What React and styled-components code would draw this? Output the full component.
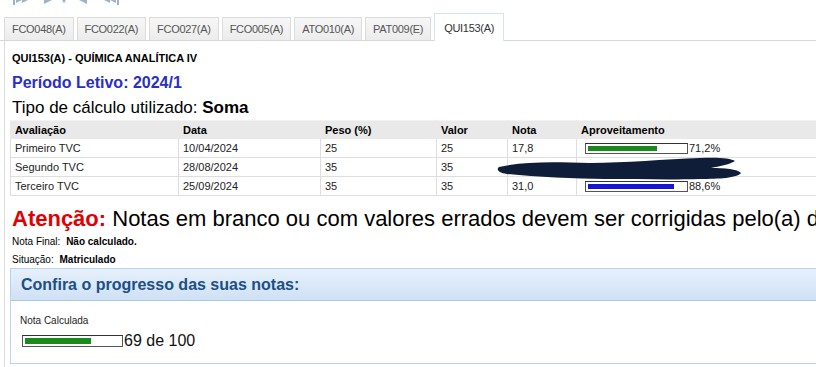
import React from "react";
import styled, { createGlobalStyle } from "styled-components";

const Global = createGlobalStyle`
  html, body { margin: 0; padding: 0; background: #fff; overflow: hidden; }
  body { font-family: "Liberation Sans", Arial, sans-serif; color: #000; }
`;

const Page = styled.div`
  width: 816px;
  height: 367px;
  position: relative;
  overflow: hidden;
  background: #fff;
`;

const Pager = styled.svg`
  display: block;
  width: 130px;
  height: 6px;
`;

const TabBar = styled.div`
  display: flex;
  align-items: flex-end;
  gap: 3px;
  height: 35px;
  padding-left: 4px;
  border-bottom: 1px solid #d6d6d6;
  box-sizing: border-box;
`;

const Tab = styled.div`
  box-sizing: border-box;
  height: ${(p) => (p.$active ? "28px" : "23px")};
  padding: 0 ${(p) => (p.$active ? "9px" : "7px")};
  display: flex;
  align-items: center;
  font-size: 11px;
  color: ${(p) => (p.$active ? "#333" : "#555")};
  background: ${(p) => (p.$active ? "#fff" : "linear-gradient(#f7f7f7, #ececec)")};
  border: 1px solid ${(p) => (p.$active ? "#d5e3f0" : "#dcdcdc")};
  border-bottom: none;
  margin-bottom: ${(p) => (p.$active ? "-1px" : "0")};
  letter-spacing: -0.3px;
`;

const Panel = styled.div`
  border-left: 1px solid #dcdcdc;
  margin-left: 4px;
  padding: 10px 0 0 5px;
  height: 340px;
  box-sizing: border-box;
`;

const CourseTitle = styled.div`
  font-size: 11px;
  font-weight: bold;
  padding-left: 2px;
  line-height: 14px;
`;

const Period = styled.div`
  margin-top: 9px;
  font-size: 16px;
  font-weight: bold;
  color: #2a2fc4;
  padding-left: 2px;
  line-height: 18px;
`;

const CalcType = styled.div`
  margin-top: 6px;
  font-size: 17px;
  padding-left: 2px;
  line-height: 20px;
  b { font-weight: bold; }
`;

const Table = styled.table`
  margin-top: 2px;
  border-collapse: collapse;
  width: 900px;
  font-size: 11px;
  table-layout: fixed;
`;

const Th = styled.th`
  text-align: left;
  font-weight: bold;
  background: #e9e9e9;
  height: 16px;
  padding: 1px 4px 0;
  border: 1px solid #e9e9e9;
  border-top: 1px solid #f3f3f3;
`;

const Td = styled.td`
  height: 18px;
  padding: 0 4px;
  border: 1px solid #dedede;
  color: #222;
  white-space: nowrap;
`;

const BarWrap = styled.div`
  display: flex;
  align-items: center;
  gap: 1px;
  margin-top: ${(p) => p.$mt || 0}px;
  margin-left: ${(p) => p.$ml || 0}px;
`;

const Bar = styled.span`
  display: inline-block;
  box-sizing: border-box;
  width: ${(p) => p.$w}px;
  height: ${(p) => p.$h}px;
  border: 1px solid #555;
  border-top-color: #333;
  padding: 2px;
  background: #fff;
`;

const Fill = styled.span`
  display: block;
  height: 100%;
  background: ${(p) => p.$color};
`;

const Scribble = styled.svg`
  position: absolute;
  left: 495px;
  top: 156px;
  pointer-events: none;
`;

const Warning = styled.div`
  margin-top: 10px;
  font-size: 22px;
  line-height: 26px;
  white-space: nowrap;
  padding-left: 2px;
`;

const Red = styled.span`
  color: #e30000;
  font-weight: bold;
`;

const Info = styled.div`
  font-size: 10px;
  line-height: 13px;
  margin-top: ${(p) => p.$mt}px;
  padding-left: 2px;
  b { font-weight: bold; margin-left: 3px; }
`;

const Box = styled.div`
  margin-top: 2px;
  width: 900px;
  border: 1px solid #b9d3ea;
  box-sizing: border-box;
`;

const BoxHead = styled.div`
  height: 31px;
  display: flex;
  align-items: center;
  padding-left: 10px;
  background: linear-gradient(#e6f0fb, #cfe1f5);
  border-bottom: 1px solid #a9c7e6;
  color: #1c4f88;
  font-size: 16px;
  font-weight: bold;
`;

const BoxBody = styled.div`
  padding: 14px 0 0 9px;
  height: 62px;
  box-sizing: border-box;
`;

const SmallLabel = styled.div`
  font-size: 10px;
  line-height: 12px;
  color: #222;
`;

const Score = styled.span`
  font-size: 16px;
  line-height: 18px;
  color: #111;
`;

const tabs = ["FCO048(A)", "FCO022(A)", "FCO027(A)", "FCO005(A)", "ATO010(A)", "PAT009(E)", "QUI153(A)"];

const rows = [
  { a: "Primeiro TVC", d: "10/04/2024", p: "25", v: "25", n: "17,8", pct: 71.2, color: "#1a8a1a", label: "71,2%" },
  { a: "Segundo TVC", d: "28/08/2024", p: "35", v: "35", n: "", pct: null },
  { a: "Terceiro TVC", d: "25/09/2024", p: "35", v: "35", n: "31,0", pct: 88.6, color: "#1515d6", label: "88,6%" },
];

export default function App() {
  return (
    <Page>
      <Global />
      <Pager viewBox="0 0 130 6">
        <g fill="#9db2cc">
          <rect x="13" y="0" width="2" height="5" />
          <polygon points="16,0 22,0 16,3" />
          <polygon points="22,0 28,0 22,3" />
          <polygon points="44,0 52,0 44,4" />
          <circle cx="64" cy="1" r="1.5" />
          <polygon points="79,0 87,0 87,4" />
          <polygon points="104,0 110,0 110,3" />
          <polygon points="110,0 116,0 116,3" />
          <rect x="117" y="0" width="2" height="5" />
        </g>
      </Pager>
      <TabBar>
        {tabs.map((t, i) => (
          <Tab key={t} $active={i === tabs.length - 1}>{t}</Tab>
        ))}
      </TabBar>
      <Panel>
        <CourseTitle>QUI153(A) - QUÍMICA ANALÍTICA IV</CourseTitle>
        <Period>Período Letivo: 2024/1</Period>
        <CalcType>Tipo de cálculo utilizado: <b>Soma</b></CalcType>
        <Table>
          <colgroup>
            <col style={{ width: 168 }} />
            <col style={{ width: 142 }} />
            <col style={{ width: 116 }} />
            <col style={{ width: 71 }} />
            <col style={{ width: 69 }} />
            <col />
          </colgroup>
          <thead>
            <tr>
              <Th>Avaliação</Th>
              <Th>Data</Th>
              <Th>Peso (%)</Th>
              <Th>Valor</Th>
              <Th>Nota</Th>
              <Th>Aproveitamento</Th>
            </tr>
          </thead>
          <tbody>
            {rows.map((r) => (
              <tr key={r.a}>
                <Td>{r.a}</Td>
                <Td>{r.d}</Td>
                <Td>{r.p}</Td>
                <Td>{r.v}</Td>
                <Td>{r.n}</Td>
                <Td>
                  {r.pct !== null && (
                    <BarWrap $ml={4}>
                      <Bar $w={103} $h={11}>
                        <Fill $color={r.color} style={{ width: `${r.pct}%` }} />
                      </Bar>
                      {r.label}
                    </BarWrap>
                  )}
                </Td>
              </tr>
            ))}
          </tbody>
        </Table>
        <Warning>
          <Red>Atenção:</Red> Notas em branco ou com valores errados devem ser corrigidas pelo(a) docente
        </Warning>
        <Info $mt={3}>Nota Final: <b>Não calculado.</b></Info>
        <Info $mt={5}>Situação: <b>Matriculado</b></Info>
        <Box>
          <BoxHead>Confira o progresso das suas notas:</BoxHead>
          <BoxBody>
            <SmallLabel>Nota Calculada</SmallLabel>
            <BarWrap $mt={5} $ml={2}>
              <Bar $w={101} $h={12}>
                <Fill $color="#1a8a1a" style={{ width: "69%" }} />
              </Bar>
              <Score>69 de 100</Score>
            </BarWrap>
          </BoxBody>
        </Box>
      </Panel>
      <Scribble width="250" height="28" viewBox="0 0 250 28">
        <path
          d="M4 11 C 30 5, 60 6, 95 7 C 130 7, 170 3, 205 2 C 222 1, 236 2, 240 5 C 234 9, 224 10, 216 12 C 229 12, 243 13, 246 17 C 242 22, 224 23, 205 23 C 175 24, 140 23, 110 23 C 80 23, 40 21, 12 18 C 3 17, 1 13, 4 11 Z"
          fill="#0f1d38"
        />
      </Scribble>
    </Page>
  );
}
